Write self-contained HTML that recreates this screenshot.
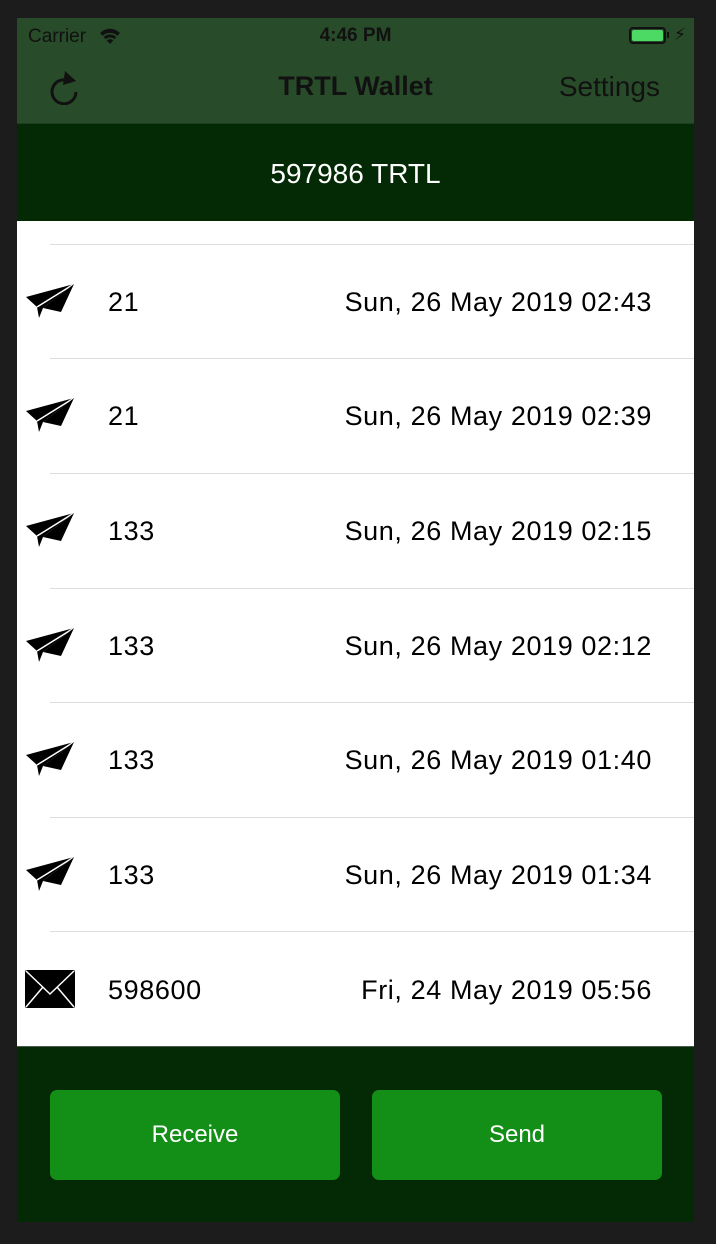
<!DOCTYPE html>
<html><head><meta charset="utf-8"><style>
*{margin:0;padding:0;box-sizing:border-box}
body{width:716px;height:1244px;background:#1c1c1c;font-family:"Liberation Sans","DejaVu Sans",sans-serif;position:relative;overflow:hidden}
.abs{position:absolute}
#nav{left:17px;top:18px;width:677px;height:105px;background:#284b29}
#bal{left:17px;top:123px;width:677px;height:98px;background:#032a04;color:#fff;font-size:28px;text-align:center;line-height:100px;border-top:1px solid #1e3f1f}
#list{left:17px;top:221px;width:677px;height:825px;background:#fff}
.sep{position:absolute;left:33px;right:0;height:1px;background:#dedede}
.row{position:absolute;left:0;right:0;height:40px;font-size:27px;letter-spacing:0.6px;color:#000;line-height:40px}
.amt{position:absolute;left:91px}
.date{position:absolute;right:42px}
.ic{position:absolute;left:8px;top:2px}
#bot{left:17px;top:1046px;width:677px;height:176px;background:#032a04;border-top:1px solid #4a5a4a}
.btn{position:absolute;top:43px;width:290px;height:90px;background:#138f18;border-radius:7px;color:#fff;font-size:24px;text-align:center;line-height:90px}
</style></head><body>
<div id="nav" class="abs">
 <div class="abs" style="left:11px;top:8px;font-size:19px;color:#111">Carrier</div>
 <svg class="abs" style="left:81px;top:9px" width="24" height="18" viewBox="0 0 24 18"><path d="M12 17 L2 6 A14 14 0 0 1 22 6 Z" fill="#111"/><path d="M5 9.5 A10 10 0 0 1 19 9.5" stroke="#284b29" stroke-width="1.6" fill="none"/><path d="M8 12.8 A6 6 0 0 1 16 12.8" stroke="#284b29" stroke-width="1.6" fill="none"/></svg>
 <div class="abs" style="left:0;width:677px;top:7px;text-align:center;font-size:19px;font-weight:bold;color:#111">4:46 PM</div>
 <div class="abs" style="left:612px;top:9px;width:37px;height:17px;border:2px solid #111;border-radius:4px;padding:1px"><div style="width:100%;height:100%;background:#4cd964;border-radius:2px"></div></div>
 <div class="abs" style="left:650px;top:14px;width:2px;height:6px;background:#111"></div>
 <div class="abs" style="left:657px;top:7px;font-size:17px;color:#111">&#x26A1;</div>
 <svg class="abs" style="left:32px;top:51px" width="32" height="36" viewBox="0 0 32 36"><path d="M22 10 A12 12 0 1 0 27 20" stroke="#111" stroke-width="3" fill="none" transform="translate(0,3)"/><path d="M16 2 L27 12 L14 16 Z" fill="#111"/></svg>
 <div class="abs" style="left:0;width:677px;top:53px;text-align:center;font-size:27px;font-weight:bold;color:#111">TRTL Wallet</div>
 <div class="abs" style="right:34px;top:53px;font-size:28px;color:#111">Settings</div>
</div>
<div id="bal" class="abs">597986 TRTL</div>
<div id="list" class="abs">
 <div class="sep" style="top:23px"></div>
 <div class="sep" style="top:137px"></div>
 <div class="sep" style="top:252px"></div>
 <div class="sep" style="top:367px"></div>
 <div class="sep" style="top:481px"></div>
 <div class="sep" style="top:596px"></div>
 <div class="sep" style="top:710px"></div>
 <div class="row" style="top:61px"><svg class="ic" width="50" height="36" viewBox="0 0 50 36"><path d="M1 13 L49 0 L18 24 L14 34 L12 23 Z" fill="#000"/><path d="M12 23 L49 0" stroke="#fff" stroke-width="1.5"/><path d="M18 24 L49 0 L36 28 Z" fill="#000"/></svg><span class="amt">21</span><span class="date">Sun, 26 May 2019 02:43</span></div>
 <div class="row" style="top:175px"><svg class="ic" width="50" height="36" viewBox="0 0 50 36"><path d="M1 13 L49 0 L18 24 L14 34 L12 23 Z" fill="#000"/><path d="M12 23 L49 0" stroke="#fff" stroke-width="1.5"/><path d="M18 24 L49 0 L36 28 Z" fill="#000"/></svg><span class="amt">21</span><span class="date">Sun, 26 May 2019 02:39</span></div>
 <div class="row" style="top:290px"><svg class="ic" width="50" height="36" viewBox="0 0 50 36"><path d="M1 13 L49 0 L18 24 L14 34 L12 23 Z" fill="#000"/><path d="M12 23 L49 0" stroke="#fff" stroke-width="1.5"/><path d="M18 24 L49 0 L36 28 Z" fill="#000"/></svg><span class="amt">133</span><span class="date">Sun, 26 May 2019 02:15</span></div>
 <div class="row" style="top:405px"><svg class="ic" width="50" height="36" viewBox="0 0 50 36"><path d="M1 13 L49 0 L18 24 L14 34 L12 23 Z" fill="#000"/><path d="M12 23 L49 0" stroke="#fff" stroke-width="1.5"/><path d="M18 24 L49 0 L36 28 Z" fill="#000"/></svg><span class="amt">133</span><span class="date">Sun, 26 May 2019 02:12</span></div>
 <div class="row" style="top:519px"><svg class="ic" width="50" height="36" viewBox="0 0 50 36"><path d="M1 13 L49 0 L18 24 L14 34 L12 23 Z" fill="#000"/><path d="M12 23 L49 0" stroke="#fff" stroke-width="1.5"/><path d="M18 24 L49 0 L36 28 Z" fill="#000"/></svg><span class="amt">133</span><span class="date">Sun, 26 May 2019 01:40</span></div>
 <div class="row" style="top:634px"><svg class="ic" width="50" height="36" viewBox="0 0 50 36"><path d="M1 13 L49 0 L18 24 L14 34 L12 23 Z" fill="#000"/><path d="M12 23 L49 0" stroke="#fff" stroke-width="1.5"/><path d="M18 24 L49 0 L36 28 Z" fill="#000"/></svg><span class="amt">133</span><span class="date">Sun, 26 May 2019 01:34</span></div>
 <div class="row" style="top:749px"><svg class="ic" width="50" height="38" viewBox="0 0 50 38" style="top:0"><rect x="0" y="0" width="50" height="38" rx="2" fill="#000"/><path d="M1 1 L25 24 L49 1 M1 37 L18 17 M49 37 L32 17" stroke="#fff" stroke-width="1.5" fill="none"/></svg><span class="amt">598600</span><span class="date">Fri, 24 May 2019 05:56</span></div>
</div>
<div id="bot" class="abs">
 <div class="btn" style="left:33px">Receive</div>
 <div class="btn" style="left:355px">Send</div>
</div>
</body></html>
